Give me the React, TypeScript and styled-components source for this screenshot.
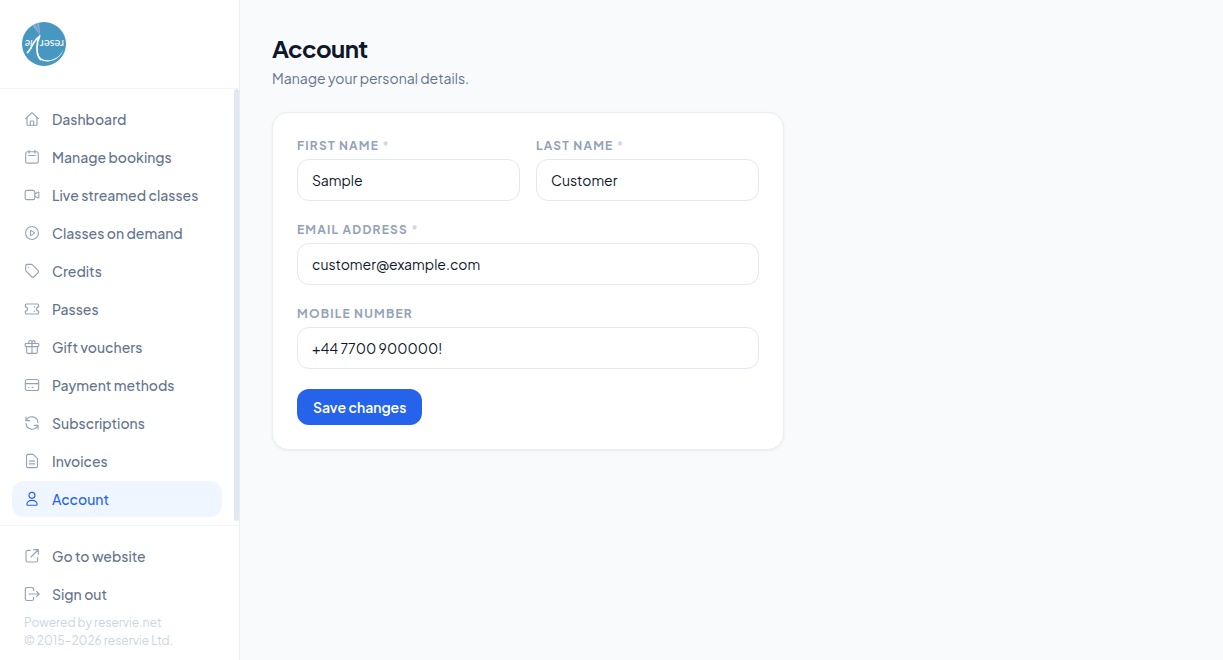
import React from "react";
import styled, { createGlobalStyle } from "styled-components";

const GlobalStyle = createGlobalStyle`
  *, *::before, *::after { box-sizing: border-box; }
  body {
    margin: 0;
    background: #f8fafc;
    color: #0f172a;
    font-family: "Plus Jakarta Sans", Inter, "Liberation Sans", sans-serif;
    font-size: 14px;
    line-height: 20px;
    -webkit-font-smoothing: antialiased;
  }
`;

const Page = styled.div`
  display: flex;
  height: 100vh;
`;

const Sidebar = styled.aside`
  display: flex;
  flex: none;
  flex-direction: column;
  width: 240px;
  background: #ffffff;
  border-right: 1px solid #e9eef5;
`;

const Brand = styled.header`
  padding: 22px;
  border-bottom: 1px solid #f1f5f9;
`;

const BrandLink = styled.a`
  display: block;
  width: 44px;
  height: 44px;
`;

const NavArea = styled.div`
  display: flex;
  flex: 1;
  min-height: 0;
`;

const Nav = styled.nav`
  flex: 1;
  min-width: 0;
  padding: 12px;
  overflow-y: auto;
  scrollbar-width: none;
`;

const ScrollRail = styled.div`
  flex: none;
  width: 5px;
`;

const ScrollThumb = styled.div`
  height: 99%;
  border-radius: 4px;
  background: #e2e8f0;
`;

const LinkList = styled.ul`
  display: flex;
  flex-direction: column;
  gap: 2px;
  margin: 0;
  padding: 0;
  list-style: none;
`;

const NavLink = styled.a<{ $active?: boolean }>`
  display: flex;
  align-items: center;
  gap: 12px;
  height: 36px;
  padding: 0 12px;
  border-radius: 12px;
  background: ${(p) => (p.$active ? "#eff6ff" : "transparent")};
  color: ${(p) => (p.$active ? "#2563eb" : "#64748b")};
  font-weight: 500;
  text-decoration: none;
  white-space: nowrap;

  svg { color: ${(p) => (p.$active ? "#2563eb" : "#94a3b8")}; }
`;

const SidebarFooter = styled.footer`
  padding: 12px 12px 10px;
  border-top: 1px solid #f1f5f9;
`;

const Legal = styled.p`
  margin: 0;
  padding: 2px 12px 0;
  color: #cbd5e1;
  font-size: 12px;
  font-weight: 400;
  line-height: 18px;
`;

const Main = styled.main`
  flex: 1;
  min-width: 0;
  padding: 32px;
  overflow-y: auto;
`;

const Title = styled.h1`
  margin: 0 0 4px;
  font-size: 24px;
  font-weight: 700;
  line-height: 32px;
  letter-spacing: -0.025em;
`;

const Subtitle = styled.p`
  margin: 0 0 24px;
  color: #64748b;
`;

const Card = styled.form`
  display: flex;
  flex-direction: column;
  gap: 20px;
  max-width: 512px;
  padding: 24px;
  background: #ffffff;
  border: 1px solid #e9eef5;
  border-radius: 16px;
  box-shadow: 0 1px 3px rgba(15, 23, 42, 0.06);
`;

const FieldRow = styled.div`
  display: grid;
  grid-template-columns: 1fr 1fr;
  gap: 16px;
`;

const FieldBox = styled.div`
  display: flex;
  flex-direction: column;
  gap: 4px;
  min-width: 0;
`;

const Label = styled.label`
  color: #94a3b8;
  font-size: 12px;
  font-weight: 700;
  line-height: 18px;
  letter-spacing: 0.1em;
  text-transform: uppercase;
`;

const Required = styled.span`
  color: #cbd5e1;
`;

const Input = styled.input`
  width: 100%;
  height: 42px;
  padding: 0 14px;
  border: 1px solid #e2e8f0;
  border-radius: 12px;
  background: #ffffff;
  color: #0f172a;
  font: inherit;
  outline: none;

  &:focus { border-color: #2563eb; }
`;

const SaveButton = styled.button`
  align-self: flex-start;
  height: 36px;
  padding: 0 16px;
  border: 0;
  border-radius: 12px;
  background: #2563eb;
  color: #ffffff;
  font: inherit;
  font-weight: 600;
  cursor: pointer;
`;

const Svg = styled.svg`
  flex: none;
  width: 16px;
  height: 16px;
  fill: none;
  stroke: currentColor;
  stroke-width: 1.7;
  stroke-linecap: round;
  stroke-linejoin: round;
`;

const icons = {
  home: (
    <>
      <path d="M2.5 11.5 10.8 3.4a1.7 1.7 0 0 1 2.4 0l8.3 8.1" />
      <path d="M4.5 9.8V20.5a.9.9 0 0 0 .9.9H18.6a.9.9 0 0 0 .9-.9V9.8" />
      <path d="M9.5 21.2V16a1 1 0 0 1 1-1h3a1 1 0 0 1 1 1v5.2" />
    </>
  ),
  calendar: (
    <>
      <rect x="2.6" y="4.2" width="18.8" height="17" rx="2.5" />
      <path d="M7.5 2v4.3M16.5 2v4.3M7 9.8h10" />
    </>
  ),
  video: (
    <>
      <rect x="1.8" y="5" width="14.4" height="14" rx="2.5" />
      <path d="m16.2 10.2 4.6-2.5a.9.9 0 0 1 1.4.8v7a.9.9 0 0 1-1.4.8l-4.6-2.5" />
    </>
  ),
  play: (
    <>
      <circle cx="12" cy="12" r="9.7" />
      <path d="M9.8 9v6a.7.7 0 0 0 1.1.6l4.4-3a.7.7 0 0 0 0-1.2l-4.4-3a.7.7 0 0 0-1.1.6Z" />
    </>
  ),
  tag: (
    <>
      <path d="M2.5 4.4v6.1c0 .7.3 1.3.7 1.8l8.3 8.3a2.5 2.5 0 0 0 3.6 0l5.9-5.9a2.5 2.5 0 0 0 0-3.6L12.7 2.8a2.5 2.5 0 0 0-1.8-.7H4.8a2.3 2.3 0 0 0-2.3 2.3Z" />
      <path d="M6.5 6.2h.1" />
    </>
  ),
  ticket: (
    <>
      <path d="M2 6.4A1.9 1.9 0 0 1 3.9 4.5H20.1A1.9 1.9 0 0 1 22 6.4v2.4a3.2 3.2 0 0 0 0 6.4v2.4a1.9 1.9 0 0 1-1.9 1.9H3.9A1.9 1.9 0 0 1 2 17.6v-2.4a3.2 3.2 0 0 0 0-6.4Z" />
      <path d="M15.5 8.5v.6M15.5 15v.6" />
    </>
  ),
  gift: (
    <>
      <rect x="1.8" y="6.8" width="20.4" height="4.7" rx="1.2" />
      <path d="M4 11.5v8a2 2 0 0 0 2 2h12a2 2 0 0 0 2-2v-8M12 6.8v14.7" />
      <path d="M12 6.8H9.3a2.3 2.3 0 1 1 2.3-2.9l.4 2.9.7-3.5a2.2 2.2 0 1 1 2.2 3.5Z" />
    </>
  ),
  card: (
    <>
      <rect x="2" y="3.8" width="20" height="16.4" rx="3" />
      <path d="M2.2 10h19.6M7 15.5h.5M12 15.5h1.5" />
    </>
  ),
  refresh: (
    <>
      <path d="M3 3v5.5h5.5M21 21v-5.5h-5.5" />
      <path d="M3.6 8.3A9 9 0 0 1 20.9 11M20.4 15.7A9 9 0 0 1 3.1 13" />
    </>
  ),
  file: (
    <>
      <path d="M3.8 4.3A2.2 2.2 0 0 1 6 2.1h7.8l6.4 6.2v11.4a2.2 2.2 0 0 1-2.2 2.2H6a2.2 2.2 0 0 1-2.2-2.2Z" />
      <path d="M8 12.2h8M8 16.4h8" />
    </>
  ),
  user: (
    <>
      <circle cx="12" cy="6.5" r="4.5" />
      <path d="M12 14c4.3 0 7.7 2.6 7.7 6.2 0 .7-.5 1.2-1.2 1.2h-13c-.7 0-1.2-.5-1.2-1.2C4.3 16.6 7.7 14 12 14Z" />
    </>
  ),
  external: (
    <>
      <path d="M9.5 3.5H5.8A2.8 2.8 0 0 0 3 6.3v11.9A2.8 2.8 0 0 0 5.8 21h11.9a2.8 2.8 0 0 0 2.8-2.8v-3.7" />
      <path d="M10.5 13.5 21 3M14.5 2.5h7v7" />
    </>
  ),
  signOut: (
    <>
      <path d="M14.5 7V5a2.8 2.8 0 0 0-2.8-2.8H4.8A2.8 2.8 0 0 0 2 5v14a2.8 2.8 0 0 0 2.8 2.8h6.9a2.8 2.8 0 0 0 2.8-2.8v-2" />
      <path d="M7.5 12h15M18.8 8l3.9 4-3.9 4" />
    </>
  ),
};

type IconName = keyof typeof icons;

const Icon = ({ name }: { name: IconName }) => (
  <Svg viewBox="0 0 24 24" aria-hidden="true">
    {icons[name]}
  </Svg>
);

const Logo = () => (
  <svg width="44" height="44" viewBox="0 0 44 44" role="img" aria-label="reservie">
    <circle cx="22" cy="22" r="22" fill="#4797c0" />
    <path d="M10.5 3.5 18.5 14 13.5 2Z" fill="#8daed3" />
    <path d="M14.5 1.6 18.5 14 17 1Z" fill="#8daed3" />
    <g fill="#ffffff" fontFamily="Lato, sans-serif" fontSize="11">
      <text transform="translate(42 18) rotate(180)">reser</text>
      <text transform="translate(10.5 18) rotate(180)" fontStyle="italic">ie</text>
    </g>
    <path
      d="M5.5 30.5C9 28 12 17 17.5 14.5M17.7 14C14.5 20 13.5 33 18.5 37.5"
      fill="none"
      stroke="#ffffff"
      strokeWidth="1.7"
      strokeLinecap="round"
    />
    <path d="M14.5 31C16 37 20 39.8 26 39.4 33.5 38.9 39.5 34 41.5 27.5 38.5 34 33 37.8 26.5 38.2 20.5 38.5 17 36 15.8 30Z" fill="#ffffff" />
  </svg>
);

const links: { icon: IconName; text: string }[] = [
  { icon: "home", text: "Dashboard" },
  { icon: "calendar", text: "Manage bookings" },
  { icon: "video", text: "Live streamed classes" },
  { icon: "play", text: "Classes on demand" },
  { icon: "tag", text: "Credits" },
  { icon: "ticket", text: "Passes" },
  { icon: "gift", text: "Gift vouchers" },
  { icon: "card", text: "Payment methods" },
  { icon: "refresh", text: "Subscriptions" },
  { icon: "file", text: "Invoices" },
  { icon: "user", text: "Account" },
];

const footerLinks: { icon: IconName; text: string }[] = [
  { icon: "external", text: "Go to website" },
  { icon: "signOut", text: "Sign out" },
];

const Links = ({ items, active }: { items: typeof links; active?: string }) => (
  <LinkList>
    {items.map(({ icon, text }) => (
      <li key={text}>
        <NavLink href="#" $active={text === active} aria-current={text === active ? "page" : undefined}>
          <Icon name={icon} />
          {text}
        </NavLink>
      </li>
    ))}
  </LinkList>
);

interface FieldProps {
  id: string;
  label: string;
  value: string;
  type?: string;
  required?: boolean;
}

const Field = ({ id, label, value, type = "text", required }: FieldProps) => (
  <FieldBox>
    <Label htmlFor={id}>
      {label}
      {required && <Required> *</Required>}
    </Label>
    <Input id={id} name={id} type={type} defaultValue={value} required={required} />
  </FieldBox>
);

export default function App() {
  return (
    <>
      <GlobalStyle />
      <Page>
        <Sidebar>
          <Brand>
            <BrandLink href="#">
              <Logo />
            </BrandLink>
          </Brand>
          <NavArea>
            <Nav>
              <Links items={links} active="Account" />
            </Nav>
            <ScrollRail aria-hidden="true">
              <ScrollThumb />
            </ScrollRail>
          </NavArea>
          <SidebarFooter>
            <Links items={footerLinks} />
            <Legal>
              Powered by reservie.net
              <br />© 2015–2026 reservie Ltd.
            </Legal>
          </SidebarFooter>
        </Sidebar>
        <Main>
          <Title>Account</Title>
          <Subtitle>Manage your personal details.</Subtitle>
          <Card onSubmit={(e) => e.preventDefault()}>
            <FieldRow>
              <Field id="first-name" label="First name" value="Sample" required />
              <Field id="last-name" label="Last name" value="Customer" required />
            </FieldRow>
            <Field id="email" label="Email address" type="email" value="customer@example.com" required />
            <Field id="mobile" label="Mobile number" type="tel" value="+44 7700 900000!" />
            <SaveButton type="submit">Save changes</SaveButton>
          </Card>
        </Main>
      </Page>
    </>
  );
}
